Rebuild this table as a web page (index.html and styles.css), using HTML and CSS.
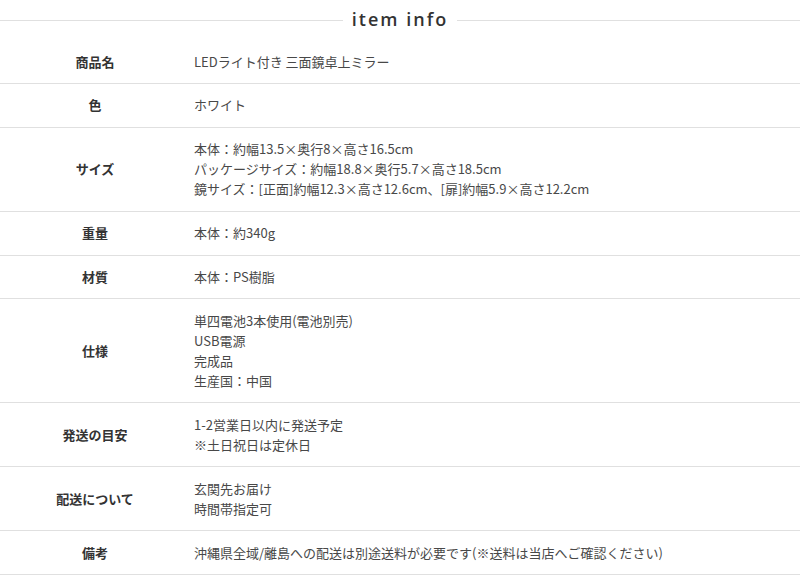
FILE: index.html
```html
<!DOCTYPE html>
<html lang="ja">
<head>
<meta charset="utf-8">
<title>item info</title>
<link rel="stylesheet" href="styles.css">
</head>
<body>
<div class="info">
  <h2 class="heading"><span class="heading-text">item info</span></h2>
  <table class="spec">
    <tbody>
      <tr><th>商品名</th><td>LEDライト付き 三面鏡卓上ミラー</td></tr>
      <tr><th>色</th><td>ホワイト</td></tr>
      <tr><th>サイズ</th><td>本体：約幅13.5×奥行8×高さ16.5cm<br>パッケージサイズ：約幅18.8×奥行5.7×高さ18.5cm<br>鏡サイズ：[正面]約幅12.3×高さ12.6cm、[扉]約幅5.9×高さ12.2cm</td></tr>
      <tr><th>重量</th><td>本体：約340g</td></tr>
      <tr><th>材質</th><td>本体：PS樹脂</td></tr>
      <tr><th>仕様</th><td>単四電池3本使用(電池別売)<br>USB電源<br>完成品<br>生産国：中国</td></tr>
      <tr><th>発送の目安</th><td>1-2営業日以内に発送予定<br>※土日祝日は定休日</td></tr>
      <tr><th>配送について</th><td>玄関先お届け<br>時間帯指定可</td></tr>
      <tr><th>備考</th><td>沖縄県全域/離島への配送は別途送料が必要です(※送料は当店へご確認ください)</td></tr>
    </tbody>
  </table>
</div>
</body>
</html>
```

FILE: styles.css
```css
html, body {
  margin: 0;
  padding: 0;
  background: #fff;
}
body {
  font-family: "Noto Sans CJK JP", "Noto Sans", sans-serif;
  color: #333;
}
.info {
  width: 800px;
}
.heading {
  display: flex;
  align-items: center;
  gap: 9px;
  height: 40px;
  margin: 0;
  box-sizing: border-box;
  font-family: "Open Sans", "DejaVu Sans", sans-serif;
  font-weight: 600;
  font-size: 18px;
  letter-spacing: 2px;
  color: #333;
}
.heading::before,
.heading::after {
  content: "";
  flex: 1;
  height: 1px;
  background: #e0e0e0;
}
.heading-text {
  position: relative;
  top: -1px;
}
.spec {
  width: 800px;
  border-collapse: collapse;
  font-size: 13px;
  line-height: 20px;
}
.spec tr {
  border-bottom: 1px solid #e0e0e0;
}
.spec th {
  width: 190px;
  padding: 11.5px 0 11.4px;
  font-weight: bold;
  text-align: center;
  vertical-align: middle;
  color: #333;
}
.spec td {
  padding: 11.5px 0 11.4px 4px;
  text-align: left;
  vertical-align: middle;
  color: #484848;
}
```
